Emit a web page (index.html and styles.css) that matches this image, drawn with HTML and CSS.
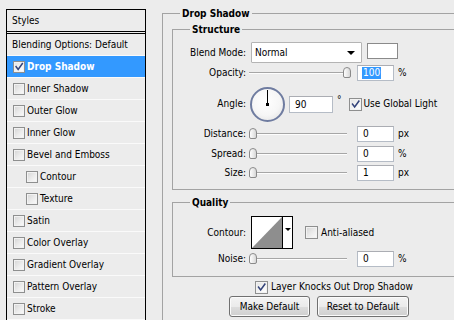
FILE: index.html
```html
<!DOCTYPE html>
<html>
<head>
<meta charset="utf-8">
<title>Layer Style</title>
<link rel="stylesheet" href="styles.css">
</head>
<body>
<div class="app">
  <aside class="styles-panel">
    <div class="sp-head">Styles</div>
    <div class="sp-item plain">Blending Options: Default</div>
    <div class="sp-item selected"><span class="cb checked"><svg viewBox="0 0 12 12"><path d="M2.5 5.5 L5 9 L10 2" /></svg></span>Drop Shadow</div>
    <div class="sp-item"><span class="cb"></span>Inner Shadow</div>
    <div class="sp-item"><span class="cb"></span>Outer Glow</div>
    <div class="sp-item"><span class="cb"></span>Inner Glow</div>
    <div class="sp-item"><span class="cb"></span>Bevel and Emboss</div>
    <div class="sp-item sub"><span class="cb"></span>Contour</div>
    <div class="sp-item sub"><span class="cb"></span>Texture</div>
    <div class="sp-item"><span class="cb"></span>Satin</div>
    <div class="sp-item"><span class="cb"></span>Color Overlay</div>
    <div class="sp-item"><span class="cb"></span>Gradient Overlay</div>
    <div class="sp-item"><span class="cb"></span>Pattern Overlay</div>
    <div class="sp-item"><span class="cb"></span>Stroke</div>
  </aside>

  <main class="settings">
    <fieldset class="group outer">
      <legend>Drop Shadow</legend>

      <fieldset class="group inner structure">
        <legend>Structure</legend>
        <div class="row r-blend">
          <span class="lbl">Blend Mode:</span>
          <div class="select">Normal<span class="arrow"></span></div>
          <span class="swatch"></span>
        </div>
        <div class="row r-16 r-opacity">
          <span class="lbl">Opacity:</span>
          <div class="slider"><span class="track"></span><span class="thumb at-max"></span></div>
          <div class="num"><span class="hl">100</span></div>
          <span class="unit">%</span>
        </div>
        <div class="row r-angle">
          <span class="lbl">Angle:</span>
          <div class="dial"><span class="hand"></span><span class="hub"></span></div>
          <div class="num wide">90</div>
          <span class="deg">°</span>
          <span class="cb big checked"><svg viewBox="0 0 13 13"><path d="M3 6 L5.5 9.5 L10.5 2.5" /></svg></span>
          <span class="cb-label">Use Global Light</span>
        </div>
        <div class="row r-16 r-dist">
          <span class="lbl">Distance:</span>
          <div class="slider"><span class="track"></span><span class="thumb"></span></div>
          <div class="num">0</div>
          <span class="unit">px</span>
        </div>
        <div class="row r-16 r-spread">
          <span class="lbl">Spread:</span>
          <div class="slider"><span class="track"></span><span class="thumb"></span></div>
          <div class="num">0</div>
          <span class="unit">%</span>
        </div>
        <div class="row r-16 r-size">
          <span class="lbl">Size:</span>
          <div class="slider"><span class="track"></span><span class="thumb"></span></div>
          <div class="num">1</div>
          <span class="unit">px</span>
        </div>
      </fieldset>

      <fieldset class="group inner quality">
        <legend>Quality</legend>
        <div class="row r-contour">
          <span class="lbl">Contour:</span>
          <div class="contour">
            <svg class="curve" viewBox="0 0 30 31" preserveAspectRatio="none"><rect width="30" height="31" fill="#fff"/><polygon points="0,31 30,0 30,31" fill="#8e8e8e"/></svg>
            <span class="c-drop"><span class="arrow small"></span></span>
          </div>
          <span class="cb big aa"></span>
          <span class="cb-label">Anti-aliased</span>
        </div>
        <div class="row r-16 r-noise">
          <span class="lbl">Noise:</span>
          <div class="slider"><span class="track"></span><span class="thumb"></span></div>
          <div class="num">0</div>
          <span class="unit">%</span>
        </div>
      </fieldset>

      <div class="knock">
        <span class="cb big checked"><svg viewBox="0 0 13 13"><path d="M3 6 L5.5 9.5 L10.5 2.5" /></svg></span>
        <span class="cb-label">Layer Knocks Out Drop Shadow</span>
      </div>
      <div class="buttons">
        <button class="btn make">Make Default</button>
        <button class="btn reset">Reset to Default</button>
      </div>
    </fieldset>
  </main>
</div>
</body>
</html>
```

FILE: styles.css
```css
* { box-sizing: border-box; }
html, body { margin: 0; padding: 0; }
body {
  width: 454px;
  height: 320px;
  overflow: hidden;
  background: #ececec;
  color: #000;
  font: 10px/1.2 "DejaVu Sans Condensed", "DejaVu Sans", sans-serif;
}
.app {
  display: flex;
  align-items: flex-start;
  width: 454px;
  height: 320px;
  overflow: hidden;
}

/* ---------- left styles list ---------- */
.styles-panel {
  flex: none;
  width: 140px;
  height: 420px;
  margin: 9px 0 0 6px;
  border: 1px solid #000;
  border-bottom: 0;
  background: #ececec;
}
.sp-head {
  height: 24px;
  line-height: 21px;
  padding-left: 5px;
  border-bottom: 3px double #000;
}
.sp-item {
  display: flex;
  align-items: center;
  gap: 2px;
  height: 22px;
  padding-left: 6px;
  border-bottom: 1px solid #fafafa;
  white-space: nowrap;
}
.sp-item.plain { padding-left: 5px; }
.sp-item.sub { padding-left: 19px; }
.sp-item.selected {
  background: #3399ff;
  color: #fff;
  font-weight: bold;
}

/* checkboxes */
.cb {
  flex: none;
  display: inline-block;
  width: 12px;
  height: 12px;
  border: 1px solid #8e8f8f;
  background: linear-gradient(135deg, #d4d4d4 0%, #ececec 55%, #fbfbfb 100%);
  box-shadow: inset 0 0 0 1px #f2f2f2;
}
.cb.big { width: 13px; height: 13px; }
.cb.checked {
  background: linear-gradient(135deg, #e2e2e2 0%, #f6f6f6 60%, #ffffff 100%);
}
.cb svg { display: block; width: 100%; height: 100%; }
.cb svg path {
  fill: none;
  stroke: #33437a;
  stroke-width: 1.8;
  stroke-linecap: square;
}
.cb-label { white-space: nowrap; }

/* ---------- right settings ---------- */
.settings {
  flex: none;
  margin: 7px 0 0 16px;
}
.group {
  margin: 0;
  padding: 0;
  min-width: 0;
  border: 1px solid #a3a3a3;
}
.group > legend {
  margin-left: 17px;
  padding: 0 2px;
  font-weight: bold;
  line-height: 13px;
}
.outer {
  width: 330px;
  height: 420px;
}
.inner {
  width: 320px;
  margin-left: 9px;
}
.structure {
  margin-top: 3px;
  padding: 6px 0 8px 0;
}
.quality {
  margin-top: 6px;
  padding: 7px 0 9px 0;
}

.row {
  display: flex;
  align-items: center;
  white-space: nowrap;
}
.lbl {
  flex: none;
  width: 73px;
  margin-right: 5px;
  text-align: right;
}
.r-blend { height: 21px; align-items: flex-start; }
.r-blend .lbl { line-height: 21px; }
.r-16 { height: 16px; }
.r-opacity { margin-top: 2px; }
.r-angle { height: 36px; margin-top: 5px; }
.r-dist { margin-top: 4px; }
.r-spread { margin-top: 4px; }
.r-size { margin-top: 3px; }
.r-contour { height: 33px; }
.r-noise { margin-top: 2px; }

/* select */
.select {
  position: relative;
  flex: none;
  width: 111px;
  height: 21px;
  line-height: 19px;
  padding-left: 3px;
  background: #fff;
  border: 1px solid #b4b4b4;
  border-radius: 1px;
}
.arrow {
  position: absolute;
  right: 6px;
  top: 8px;
  width: 0;
  height: 0;
  border-left: 4px solid transparent;
  border-right: 4px solid transparent;
  border-top: 4px solid #000;
}
.swatch {
  flex: none;
  width: 31px;
  height: 16px;
  margin: 1px 0 0 5px;
  background: #fff;
  border: 1px solid #8a8a8a;
}

/* slider */
.slider {
  position: relative;
  flex: none;
  width: 106px;
  height: 16px;
  margin-left: -5px;
  padding-left: 3px;
}
.track {
  position: absolute;
  left: 3px;
  top: 7px;
  width: 98px;
  height: 2px;
  border-top: 1px solid #a6a6a6;
  border-bottom: 1px solid #fdfdfd;
}
.thumb {
  position: absolute;
  left: 3px;
  top: 2px;
  width: 8px;
  height: 11px;
  border: 1px solid #8a8a8a;
  border-radius: 4px 4px 2px 2px;
  background: linear-gradient(90deg, #fdfdfd 0%, #e8e8e8 60%, #d6d6d6 100%);
}
.thumb.at-max { left: 97px; }

/* numeric input */
.num {
  flex: none;
  width: 37px;
  height: 16px;
  margin-left: 5px;
  padding-left: 5px;
  line-height: 14px;
  background: #fff;
  border: 1px solid #b5bcc6;
  border-top-color: #abadb3;
}
.num.wide {
  width: 44px;
  height: 17px;
  margin-left: 4px;
  line-height: 15px;
}
.hl {
  display: inline-block;
  background: #3399ff;
  color: #fff;
  padding: 0 1px;
  margin-left: -1px;
  line-height: 12px;
}
.unit { margin-left: 4px; }

/* angle dial */
.dial {
  position: relative;
  flex: none;
  width: 35px;
  height: 35px;
  margin-left: -1px;
  border: 2px solid #6f7ca0;
  border-radius: 50%;
  background: radial-gradient(circle at 45% 40%, #ffffff 0%, #f6f6f6 55%, #dedede 100%);
}
.hand {
  position: absolute;
  left: 15px;
  top: 1px;
  width: 1px;
  height: 15px;
  background: #000;
}
.hub {
  position: absolute;
  left: 14px;
  top: 14px;
  width: 3px;
  height: 3px;
  background: #000;
}
.deg {
  align-self: flex-start;
  margin: 8px 0 0 4px;
}
.r-angle .cb { margin-left: 7px; }
.r-angle .cb-label { margin-left: 2px; }

/* contour picker */
.contour {
  flex: none;
  display: flex;
  width: 42px;
  height: 33px;
  border: 1px solid #000;
  background: #fff;
}
.curve { display: block; width: 30px; height: 31px; }
.c-drop {
  position: relative;
  flex: 1;
  border-left: 1px solid #000;
}
.arrow.small {
  right: auto;
  left: 2px;
  top: 11px;
  border-left-width: 3px;
  border-right-width: 3px;
  border-top-width: 3px;
}
.cb.aa { margin-left: 12px; }
.r-contour .cb-label { margin-left: 3px; }

/* knock out + buttons */
.knock {
  display: flex;
  align-items: center;
  height: 14px;
  margin: 3px 0 0 92px;
}
.knock .cb-label { margin-left: 3px; }
.buttons {
  display: flex;
  gap: 7px;
  margin: 2px 0 0 66px;
}
.btn {
  height: 21px;
  padding: 0;
  font: inherit;
  color: #000;
  border: 1px solid #707070;
  border-radius: 3px;
  background: linear-gradient(#f3f3f3 0%, #ebebeb 50%, #dddddd 51%, #cfcfcf 100%);
  box-shadow: inset 0 0 0 1px #fbfbfb;
}
.btn.make { width: 81px; }
.btn.reset { width: 92px; }
```
